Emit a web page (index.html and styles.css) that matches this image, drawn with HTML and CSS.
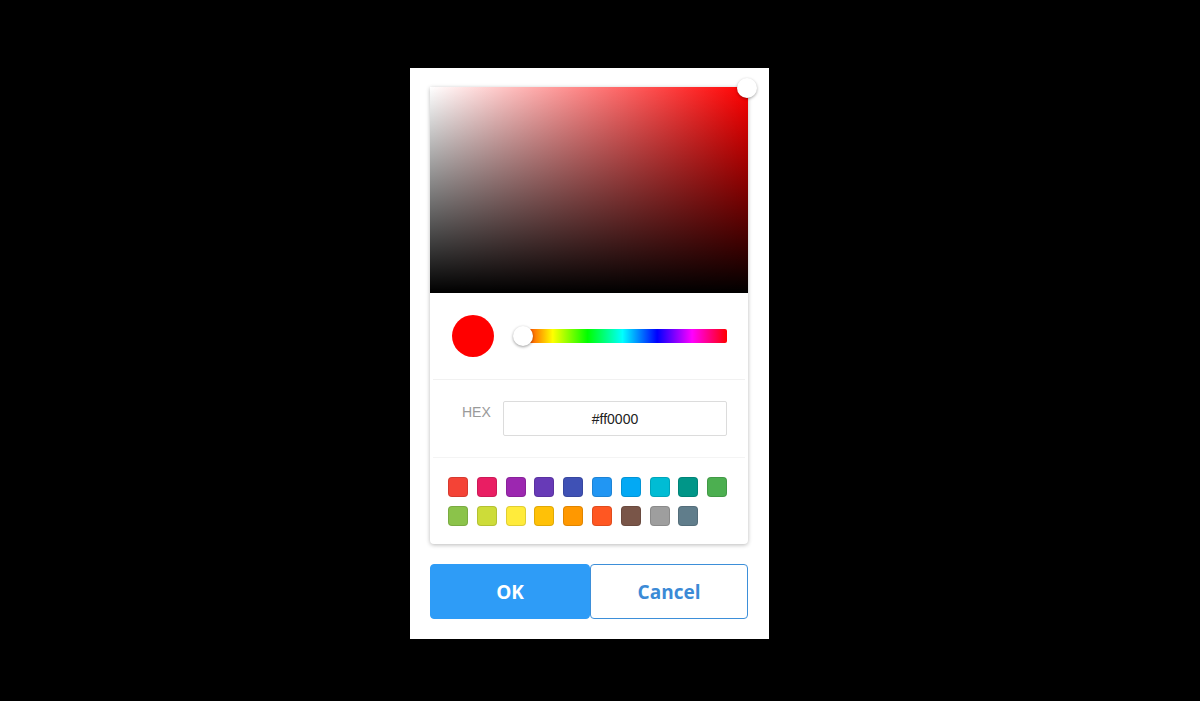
FILE: index.html
```html
<!DOCTYPE html>
<html>
<head>
<meta charset="utf-8">
<link rel="stylesheet" href="styles.css">
</head>
<body>
<div class="stage">
  <div class="dialog">
    <div class="card">
      <div class="saturation">
        <span class="sat-thumb"></span>
      </div>
      <div class="hue-row">
        <span class="preview"></span>
        <div class="hue-bar">
          <span class="hue-thumb"></span>
        </div>
      </div>
      <div class="hex-row">
        <span class="hex-label">HEX</span>
        <div class="hex-input">#ff0000</div>
      </div>
      <div class="swatches">
        <span class="sw" style="background:#f44336"></span>
        <span class="sw" style="background:#e91e63"></span>
        <span class="sw" style="background:#9c27b0"></span>
        <span class="sw" style="background:#673ab7"></span>
        <span class="sw" style="background:#3f51b5"></span>
        <span class="sw" style="background:#2196f3"></span>
        <span class="sw" style="background:#03a9f4"></span>
        <span class="sw" style="background:#00bcd4"></span>
        <span class="sw" style="background:#009688"></span>
        <span class="sw" style="background:#4caf50"></span>
        <span class="sw" style="background:#8bc34a"></span>
        <span class="sw" style="background:#cddc39"></span>
        <span class="sw" style="background:#ffeb3b"></span>
        <span class="sw" style="background:#ffc107"></span>
        <span class="sw" style="background:#ff9800"></span>
        <span class="sw" style="background:#ff5722"></span>
        <span class="sw" style="background:#795548"></span>
        <span class="sw" style="background:#9e9e9e"></span>
        <span class="sw" style="background:#607d8b"></span>
      </div>
    </div>
    <div class="buttons">
      <button class="btn btn-ok">OK</button>
      <button class="btn btn-cancel">Cancel</button>
    </div>
  </div>
</div>
</body>
</html>
```
FILE: styles.css
```css
html, body {
  margin: 0;
  padding: 0;
  background: #000;
  width: 1200px;
  height: 701px;
  overflow: hidden;
  font-family: "Liberation Sans", Arial, sans-serif;
}
.stage {
  display: flex;
  padding-top: 68px;
  padding-left: 410px;
}
.dialog {
  width: 359px;
  height: 571px;
  box-sizing: border-box;
  background: #fff;
  padding: 19px 21px 20px 20px;
  display: flex;
  flex-direction: column;
}
.card {
  width: 318px;
  height: 457px;
  background: #fff;
  border-radius: 0 0 4px 4px;
  box-shadow: 0 1px 4px rgba(0,0,0,0.28);
  display: flex;
  flex-direction: column;
}
.saturation {
  position: relative;
  height: 206px;
  background:
    linear-gradient(to top, #000, rgba(0,0,0,0)),
    linear-gradient(to right, #fff, #ff0000);
}
.sat-thumb {
  position: absolute;
  right: -9px;
  top: -9px;
  width: 20px;
  height: 20px;
  border-radius: 50%;
  background: #fff;
  box-shadow: 0 1px 3px rgba(0,0,0,0.35);
}
.hue-row {
  height: 87px;
  border-bottom: 1px solid #f1f1f1;
  margin: 0 3px;
  padding: 0 18px 0 19px;
  display: flex;
  align-items: center;
  gap: 24px;
  box-sizing: border-box;
}
.preview {
  width: 42px;
  height: 42px;
  border-radius: 50%;
  background: #ff0000;
  flex: none;
}
.hue-bar {
  position: relative;
  flex: 1;
  height: 14px;
  border-radius: 2px;
  background: linear-gradient(to right, #ff0000 0%, #ffff00 16.6%, #00ff00 33.3%, #00ffff 50%, #0000ff 66.6%, #ff00ff 83.3%, #ff0000 100%);
}
.hue-thumb {
  position: absolute;
  left: -5px;
  top: -3px;
  width: 20px;
  height: 20px;
  border-radius: 50%;
  background: #fff;
  box-shadow: 0 1px 3px rgba(0,0,0,0.4);
}
.hex-row {
  height: 78px;
  border-bottom: 1px solid #f4f4f4;
  margin: 0 3px;
  padding: 21px 18px 0 29px;
  box-sizing: border-box;
  display: flex;
  align-items: flex-start;
  gap: 12px;
}
.hex-label {
  color: #9a9a9a;
  font-size: 14px;
  line-height: 18px;
  padding-top: 2px;
  width: 29px;
}
.hex-input {
  flex: 1;
  height: 35px;
  box-sizing: border-box;
  border: 1px solid #dcdcdc;
  border-radius: 2px;
  display: flex;
  align-items: center;
  justify-content: center;
  font-size: 14px;
  color: #222;
  padding-top: 1px;
}
.swatches {
  display: grid;
  grid-template-columns: repeat(10, 20px);
  column-gap: 8.8px;
  row-gap: 9px;
  padding: 19px 0 0 18px;
}
.sw {
  width: 20px;
  height: 20px;
  border-radius: 4px;
  box-shadow: inset 0 0 0 1px rgba(0,0,0,0.12);
}
.buttons {
  display: flex;
  margin-top: 20px;
  height: 55px;
}
.btn {
  height: 55px;
  border-radius: 4px;
  font-family: "Open Sans", sans-serif;
  font-weight: 700;
  font-size: 19px;
  cursor: pointer;
  padding: 0;
}
.btn-ok {
  width: 160px;
  background: #2e9cf7;
  border: 1px solid #2e9cf7;
  color: #fff;
}
.btn-cancel {
  width: 158px;
  background: #fff;
  border: 1px solid #3d8fd9;
  color: #3b8ad6;
}
```
